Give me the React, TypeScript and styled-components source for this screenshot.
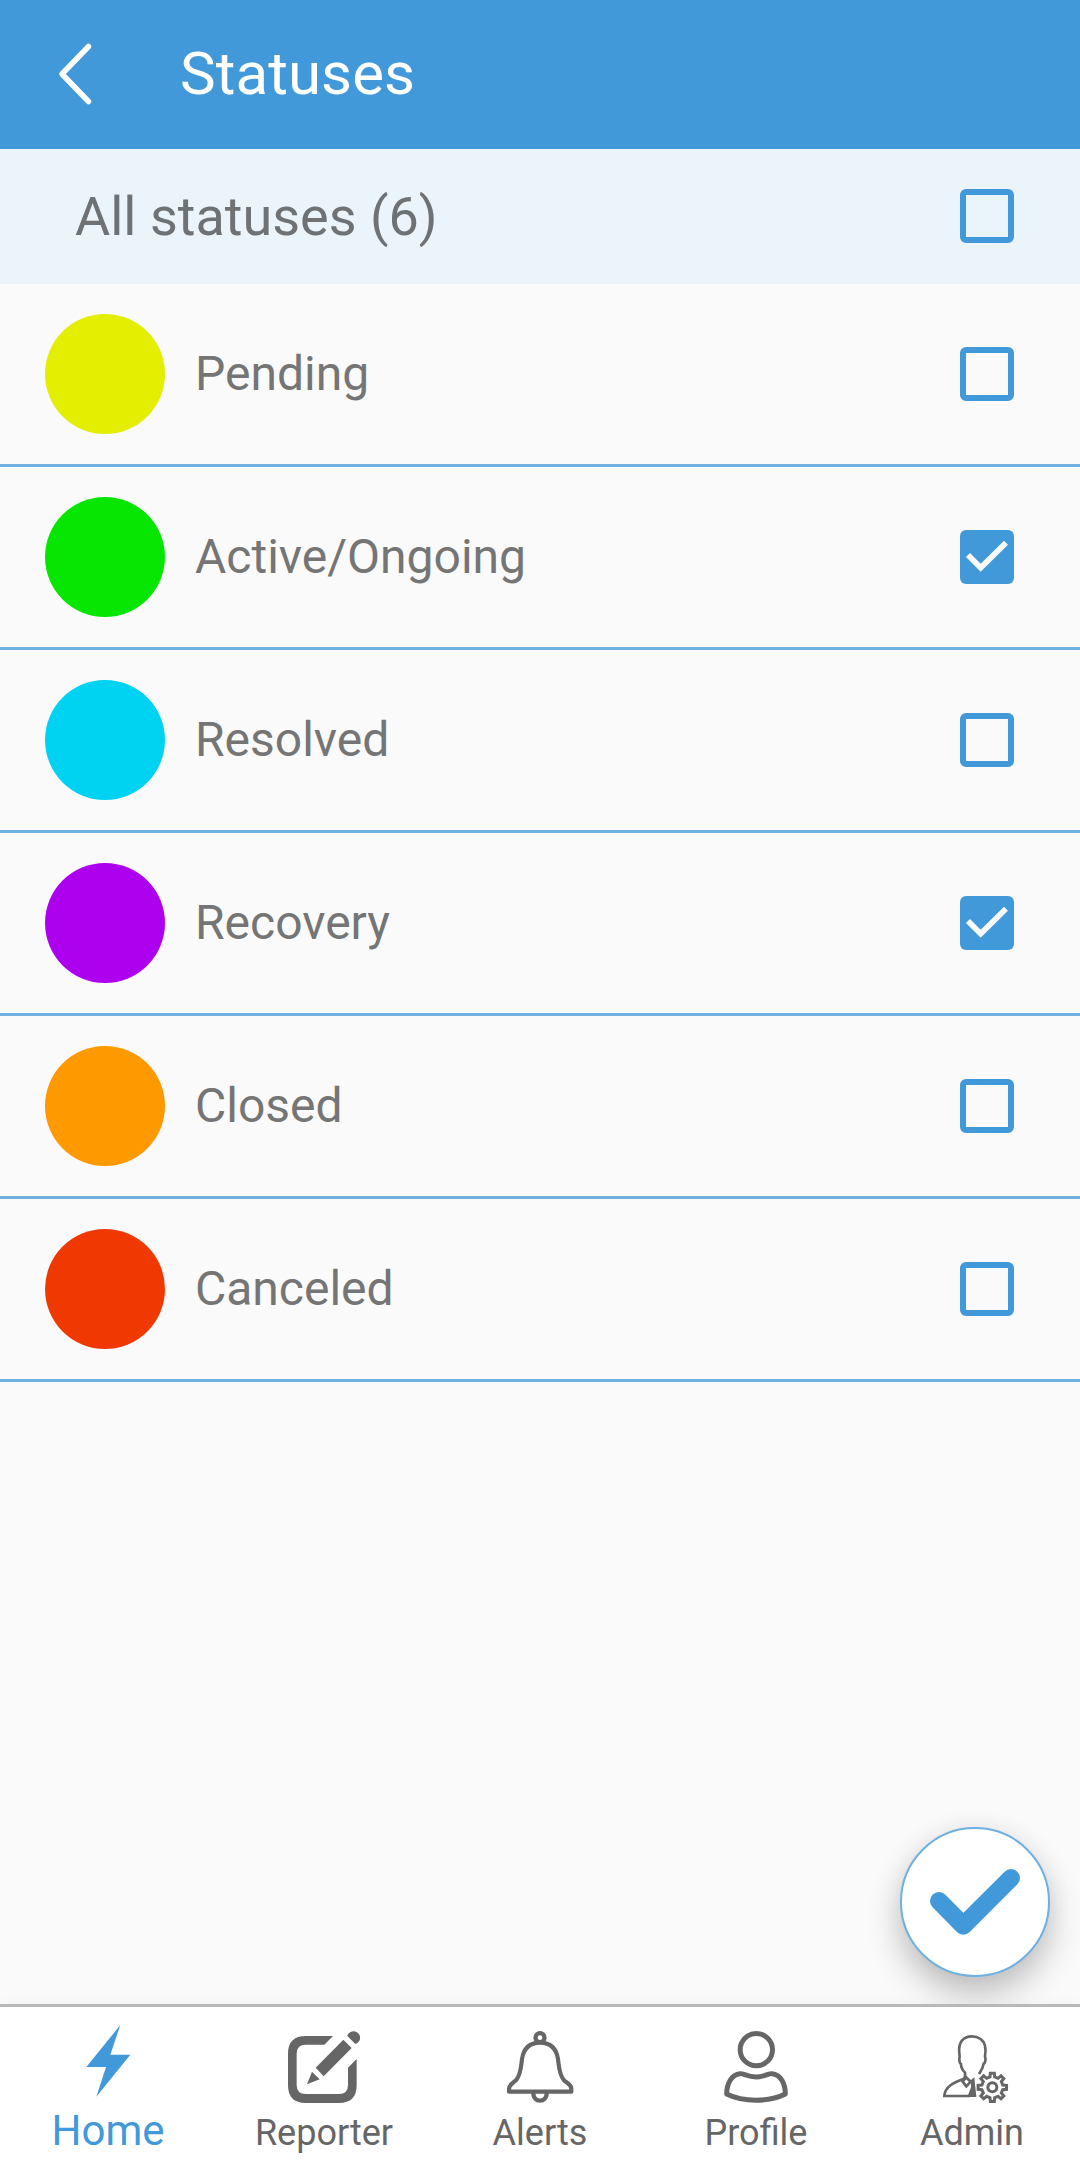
import React, { useState } from "react";
import styled, { createGlobalStyle } from "styled-components";

const BLUE = "#4299d9";
const GREY = "#666666";

const GlobalStyle = createGlobalStyle`
  *, *::before, *::after { box-sizing: border-box; }
  body { margin: 0; background: #fafafa; }
`;

const Screen = styled.div`
  display: flex;
  flex-direction: column;
  width: 1080px;
  height: 2175px;
  background: #fafafa;
  font-family: Roboto, "Liberation Sans", sans-serif;
  overflow: hidden;
`;

const Header = styled.header`
  display: flex;
  align-items: center;
  flex: none;
  height: 149px;
  padding: 0 0 1px 54px;
  background: ${BLUE};
`;

const BackButton = styled.button`
  display: flex;
  width: 42px;
  padding: 0;
  border: 0;
  background: none;
`;

const Title = styled.h1`
  margin: 0 0 1px 84px;
  font-size: 60px;
  font-weight: 400;
  line-height: 71px;
  letter-spacing: 0.1px;
  color: #fff;
`;

const AllRow = styled.div`
  display: flex;
  align-items: center;
  justify-content: space-between;
  flex: none;
  height: 135px;
  padding: 0 66px 1px 75px;
  background: #ebf3fb;
`;

const AllLabel = styled.span`
  margin-top: 1px;
  font-size: 54px;
  line-height: 63px;
  color: #6e7275;
`;

const List = styled.ul`
  flex: 1;
  margin: 0;
  padding: 0;
  list-style: none;
`;

const Row = styled.li`
  display: flex;
  align-items: center;
  height: 183px;
  padding: 0 66px 0 45px;
  border-bottom: 3px solid #6eb0df;
`;

const Dot = styled.span<{ $color: string }>`
  flex: none;
  width: 120px;
  height: 120px;
  border-radius: 50%;
  background: ${(p) => p.$color};
`;

const RowLabel = styled.span`
  flex: 1;
  margin-left: 30px;
  font-size: 48px;
  line-height: 56px;
  color: #757575;
`;

const Box = styled.button<{ $on: boolean }>`
  display: flex;
  flex: none;
  width: 54px;
  height: 54px;
  padding: 0;
  border: ${(p) => (p.$on ? "0" : `6px solid ${BLUE}`)};
  border-radius: 6px;
  background: ${(p) => (p.$on ? BLUE : "transparent")};
`;

const Footer = styled.div`
  position: relative;
  flex: none;
  height: 171px;
`;

const Fab = styled.button`
  position: absolute;
  right: 30px;
  bottom: 198px;
  display: flex;
  align-items: center;
  justify-content: center;
  width: 150px;
  height: 150px;
  padding: 0;
  border: 2px solid #6eb0df;
  border-radius: 50%;
  background: #fff;
  box-shadow: 0 18px 34px rgba(0, 0, 0, 0.23), 0 0 26px rgba(0, 0, 0, 0.05);
`;

const TabBar = styled.nav`
  position: relative;
  display: grid;
  grid-template-columns: repeat(5, 1fr);
  height: 171px;
  border-top: 3px solid #b9b9b9;
  background: #fff;
  box-shadow: 0 0 14px rgba(0, 0, 0, 0.04);
`;

const Tab = styled.a<{ $active: boolean }>`
  display: flex;
  flex-direction: column;
  align-items: center;
  padding-top: ${(p) => (p.$active ? "18px" : "24px")};
  color: ${(p) => (p.$active ? BLUE : GREY)};
`;

const TabLabel = styled.span<{ $active: boolean }>`
  margin-top: ${(p) => (p.$active ? "10px" : "9px")};
  font-size: ${(p) => (p.$active ? "42px" : "36px")};
  line-height: ${(p) => (p.$active ? "48px" : "42px")};
`;

const Icon = styled.svg`
  display: block;
  flex: none;
  overflow: visible;
`;

const BoltIcon = () => (
  <Icon width="72" height="72" viewBox="216 105 216 216" fill="currentColor">
    <path d="M361 105 331 194H391L289 320 318 231H259Z" />
  </Icon>
);

const ReporterIcon = () => (
  <Icon width="72" height="72" viewBox="204 123 216 216" fill="currentColor">
    <path d="M339 138H257Q204 138 204 191V286Q204 339 257 339H357Q410 339 410 286V207L384 233V285Q384 312 357 312H257Q230 312 230 285V191Q230 164 257 164H313Z" />
    <path d="M370 149 395 174 311 259 287 233Z" />
    <path d="M276 245 299 268 261 283Z" />
    <path d="M382 138A19.5 19.5 0 1 1 406 162Z" />
  </Icon>
);

const BellIcon = () => (
  <Icon width="72" height="72" viewBox="192 123 216 216" fill="none" stroke="currentColor">
    <circle cx="300" cy="143" r="13.5" strokeWidth="13" />
    <path
      d="M300 158C268 158 251 176 246 207C243 229 243 254 228 271C219 280 207 282 207 298V305H394V298C394 282 381 280 372 271C357 254 357 229 354 207C349 176 332 158 300 158Z"
      strokeWidth="12.5"
      strokeLinejoin="round"
    />
    <path d="M280 308V312A20 20 0 0 0 320 312V308" strokeWidth="13" />
  </Icon>
);

const ProfileIcon = () => (
  <Icon width="72" height="72" viewBox="180 123 216 216" fill="none" stroke="currentColor" strokeWidth="15">
    <circle cx="289" cy="179" r="48.5" />
    <path
      d="M240 251C215 253 200 281 200 312C250 337 326 337 376 312C376 281 362 253 336 251C328 249 313 261 288 261C263 261 248 249 240 251Z"
      strokeLinejoin="round"
    />
  </Icon>
);

const gearPath = (cx: number, cy: number) => {
  const teeth = 8;
  const points: string[] = [];
  for (let i = 0; i < teeth; i++) {
    const a = (i * 2 * Math.PI) / teeth;
    [
      [-0.22, 32],
      [-0.14, 43],
      [0.14, 43],
      [0.22, 32],
    ].forEach(([d, r]) => {
      points.push(`${(cx + r * Math.sin(a + d)).toFixed(1)} ${(cy - r * Math.cos(a + d)).toFixed(1)}`);
    });
  }
  return `M${points.join("L")}Z`;
};

const AdminIcon = () => (
  <Icon width="72" height="72" viewBox="228 123 216 216" fill="none" stroke="currentColor" strokeWidth="8">
    <path d="M315 264V248C307 240 303 233 303 222C299 219 298 213 298 206C300 202 299 198 298 190C294 156 310 139 336 139C353 139 358 145 363 148C378 158 378 181 375 200C378 207 376 219 371 221C369 235 363 241 357 252" />
    <path d="M315 258V265C291 275 255 285 253 318H330" />
    <path d="M318 262 332 275 319 289 308 275Z" />
    <path d="M333 270 343 262 349 321H322L333 292Z" fill="currentColor" stroke="none" />
    <path d={gearPath(397, 292)} strokeWidth="9" />
    <circle cx="397" cy="292" r="13.5" strokeWidth="9" />
  </Icon>
);

const statuses = [
  { name: "Pending", color: "#e4ee00", checked: false },
  { name: "Active/Ongoing", color: "#07e600", checked: true },
  { name: "Resolved", color: "#00d2f1", checked: false },
  { name: "Recovery", color: "#ad00ee", checked: true },
  { name: "Closed", color: "#ff9900", checked: false },
  { name: "Canceled", color: "#ef3900", checked: false },
];

const tabs = [
  { name: "Home", icon: BoltIcon },
  { name: "Reporter", icon: ReporterIcon },
  { name: "Alerts", icon: BellIcon },
  { name: "Profile", icon: ProfileIcon },
  { name: "Admin", icon: AdminIcon },
];

const Checkbox = ({ on, label, onToggle }: { on: boolean; label: string; onToggle: () => void }) => (
  <Box $on={on} role="checkbox" aria-checked={on} aria-label={label} onClick={onToggle}>
    {on && (
      <Icon width="54" height="54" viewBox="0 0 162 162">
        <path d="M24 75 62 113 138 38" fill="none" stroke="#fafafa" strokeWidth="17" />
      </Icon>
    )}
  </Box>
);

export default function App() {
  const [checks, setChecks] = useState(statuses.map((s) => s.checked));
  const all = checks.every(Boolean);
  return (
    <>
      <GlobalStyle />
      <Screen>
        <Header>
          <BackButton aria-label="Back">
            <Icon width="42" height="62" viewBox="0 0 42 62">
              <path d="M34.5 3.5 8 31 34.5 58.5" fill="none" stroke="#fff" strokeWidth="5.5" strokeLinecap="round" strokeLinejoin="round" />
            </Icon>
          </BackButton>
          <Title>Statuses</Title>
        </Header>
        <AllRow>
          <AllLabel>All statuses (6)</AllLabel>
          <Checkbox on={all} label="All statuses" onToggle={() => setChecks(checks.map(() => !all))} />
        </AllRow>
        <List>
          {statuses.map((s, i) => (
            <Row key={s.name}>
              <Dot $color={s.color} />
              <RowLabel>{s.name}</RowLabel>
              <Checkbox
                on={checks[i]}
                label={s.name}
                onToggle={() => setChecks(checks.map((c, j) => (j === i ? !c : c)))}
              />
            </Row>
          ))}
        </List>
        <Footer>
          <Fab aria-label="Apply">
            <Icon width="90" height="66" viewBox="0 0 270 198">
              <path d="M27 96 100 170 243 27" fill="none" stroke={BLUE} strokeWidth="54" strokeLinecap="round" strokeLinejoin="round" />
            </Icon>
          </Fab>
          <TabBar>
            {tabs.map(({ name, icon: TabIcon }, i) => (
              <Tab key={name} $active={i === 0}>
                <TabIcon />
                <TabLabel $active={i === 0}>{name}</TabLabel>
              </Tab>
            ))}
          </TabBar>
        </Footer>
      </Screen>
    </>
  );
}
